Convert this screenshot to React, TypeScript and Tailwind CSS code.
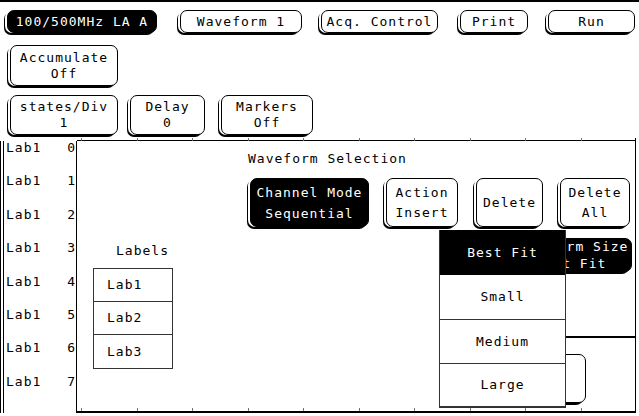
import React from 'react'

type BtnProps = {
  lines: string[]
  dark?: boolean
  className: string
  leading?: string
}

// Rounded HP-style softkey with the offset left/bottom shadow
function HpButton({ lines, dark, className, leading = 'leading-[16px]' }: BtnProps) {
  return (
    <div
      className={`flex shrink-0 flex-col items-center justify-center rounded-[7px] border border-black shadow-[-2px_0_0_0_#fff,-3px_2px_0_0_#000] ${
        dark ? 'bg-black text-white' : 'bg-white text-black'
      } ${leading} ${className}`}
    >
      {lines.map((l, i) => (
        <span key={i} className="whitespace-pre">
          {l}
        </span>
      ))}
    </div>
  )
}

function Ruler({ bottom }: { bottom?: boolean }) {
  return (
    <div className={`flex shrink-0 pl-[4px] ${bottom ? 'h-[5px] border-b-2' : 'h-[3px] border-b'} border-black`}>
      {Array.from({ length: 10 }).map((_, i) => (
        <span key={i} className="h-[3px] w-[55.5px] shrink-0 border-l border-gray-500" />
      ))}
    </div>
  )
}

const sizes = ['Small', 'Medium', 'Large']

export default function App() {
  return (
    <div className="relative h-[416px] w-[639px] overflow-hidden bg-white font-['DejaVu_Sans_Mono',monospace] text-[13px] tracking-[1px] text-black">
      <div className="h-[2px] bg-black" />

      {/* ── Softkey rows ── */}
      <div className="mt-[8px] flex items-start">
        <HpButton lines={['100/500MHz LA A']} dark className="ml-[7px] h-[23px] w-[150px]" />
        <HpButton lines={['Waveform 1']} className="ml-[23px] h-[23px] w-[122px]" />
        <HpButton lines={['Acq. Control']} className="ml-[19px] h-[23px] w-[117px]" />
        <HpButton lines={['Print']} className="ml-[22px] h-[23px] w-[68px]" />
        <HpButton lines={['Run']} className="ml-[20px] h-[23px] w-[87px]" />
      </div>
      <div className="mt-[12px] flex items-start">
        <HpButton lines={['Accumulate', 'Off']} className="ml-[10px] h-[41px] w-[108px]" />
      </div>
      <div className="mt-[9px] flex items-start">
        <HpButton lines={['states/Div', '1']} className="ml-[10px] h-[40px] w-[108px]" />
        <HpButton lines={['Delay', '0']} className="ml-[12px] h-[40px] w-[75px]" />
        <HpButton lines={['Markers', 'Off']} className="ml-[16px] h-[40px] w-[92px]" />
      </div>

      {/* ── Waveform area ── */}
      <div className="mt-[3px] flex h-[275px]">
        <div className="mt-[3px] flex w-[77px] shrink-0 flex-col border-l-4 border-r border-double border-black">
          {Array.from({ length: 8 }).map((_, i) => (
            <div key={i} className="flex h-[33.4px] shrink-0 justify-between pl-[2px] pr-0 leading-[14px]">
              <span>Lab1</span>
              <span>{i}</span>
            </div>
          ))}
        </div>

        <div className="flex w-[559px] shrink-0 flex-col border-r border-black">
          <Ruler />
          <div className="relative flex-1">
            <div className="mt-[11px] pl-[171px] leading-[14px]">Waveform Selection</div>

            <div className="mt-[12px] flex items-start pl-[173px]">
              <HpButton lines={['Channel Mode', 'Sequential']} dark leading="leading-[21px]" className="h-[49px] w-[119px]" />
              <HpButton lines={['Action', 'Insert']} leading="leading-[20px]" className="ml-[17px] h-[49px] w-[72px]" />
              <HpButton lines={['Delete']} leading="leading-[20px]" className="ml-[18px] h-[49px] w-[67px]" />
              <HpButton lines={['Delete', 'All']} leading="leading-[20px]" className="ml-[17px] h-[49px] w-[70px]" />
            </div>

            <div className="flex">
              <div className="w-[360px] shrink-0">
                <div className="mt-[17px] pl-[39px] leading-[14px]">Labels</div>
                <div className="ml-[16px] mt-[10px] w-[80px] border border-[#333]">
                  {['Lab1', 'Lab2', 'Lab3'].map((l, i) => (
                    <div
                      key={l}
                      className={`flex h-[33px] items-center pl-[13px] ${i < 2 ? 'border-b border-[#333]' : ''}`}
                    >
                      {l}
                    </div>
                  ))}
                </div>
              </div>
              <div className="flex-1">
                <HpButton
                  lines={['Waveform Size', 'Best Fit']}
                  dark
                  leading="leading-[17px]"
                  className="ml-[73px] mt-[11px] h-[34px] w-[122px]"
                />
                <div className="ml-[30px] mt-[64px] h-[2px] bg-black" />
                <HpButton lines={['']} className="ml-[33px] mt-[16px] h-[49px] w-[116px]" />
              </div>
            </div>

            {/* Size pop-up menu */}
            <div className="absolute left-[362px] top-[89px] flex w-[127px] flex-col border-x border-b-2 border-[#333] bg-white">
              <div className="flex h-[45px] items-center justify-center bg-black text-white">Best Fit</div>
              {sizes.map((s, i) => (
                <div
                  key={s}
                  className={`flex items-center justify-center ${
                    i === 0 ? 'h-[45px] border-b border-[#333]' : i === 1 ? 'h-[44px] border-b border-[#333]' : 'h-[42px]'
                  }`}
                >
                  {s}
                </div>
              ))}
            </div>
          </div>
          <Ruler bottom />
        </div>
      </div>
    </div>
  )
}
